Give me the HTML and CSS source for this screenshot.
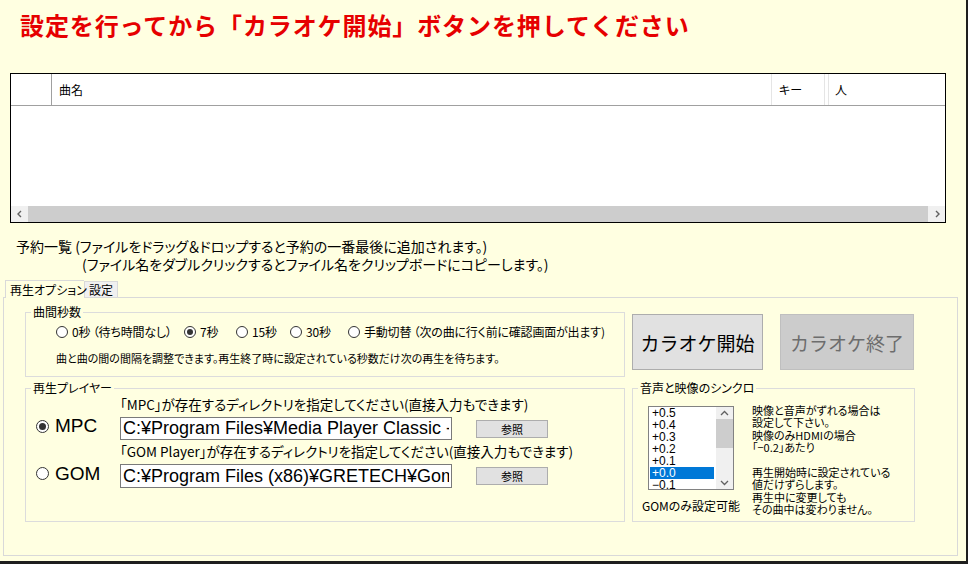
FILE: index.html
```html
<!DOCTYPE html>
<html lang="ja">
<head>
  <meta charset="utf-8">
  <link rel="stylesheet" href="styles.css">
</head>
<body>
<div class="window">
  <h1 class="title">設定を行ってから「カラオケ開始」ボタンを押してください</h1>

  <div class="grid">
    <div class="grid-head">
      <div class="col col-no"></div>
      <div class="col col-name">曲名</div>
      <div class="col col-key">キー</div>
      <div class="col col-person">人</div>
    </div>
    <div class="grid-body"></div>
    <div class="hscroll">
      <span class="hs-btn"><svg width="8" height="8" viewBox="0 0 8 8"><polyline points="5,1 2,4 5,7" fill="none" stroke="#606060" stroke-width="1.4"/></svg></span>
      <span class="hs-track"></span>
      <span class="hs-btn"><svg width="8" height="8" viewBox="0 0 8 8"><polyline points="3,1 6,4 3,7" fill="none" stroke="#606060" stroke-width="1.4"/></svg></span>
    </div>
  </div>

  <p class="note">予約一覧 (ファイルをドラッグ＆ドロップすると予約の一番最後に追加されます。)<br>
    <span class="note-indent">(ファイル名をダブルクリックするとファイル名をクリップボードにコピーします。)</span></p>

  <div class="tabs">
    <div class="tab tab-active">再生オプション</div>
    <div class="tab">設定</div>
  </div>

  <div class="panel">
    <fieldset class="group">
      <legend>曲間秒数</legend>
      <div class="interval-body">
        <div class="radio-row">
          <label class="radio r-0"><span class="dot"></span>0秒 （待ち時間なし）</label>
          <label class="radio r-7"><span class="dot checked"></span>7秒</label>
          <label class="radio r-15"><span class="dot"></span>15秒</label>
          <label class="radio r-30"><span class="dot"></span>30秒</label>
          <label class="radio"><span class="dot"></span>手動切替 （次の曲に行く前に確認画面が出ます)</label>
        </div>
        <p class="hint">曲と曲の間の間隔を調整できます。再生終了時に設定されている秒数だけ次の再生を待ちます。</p>
      </div>
    </fieldset>

    <div class="actions">
      <button class="big-btn">カラオケ開始</button>
      <button class="big-btn big-btn-off" disabled>カラオケ終了</button>
    </div>

    <fieldset class="group">
      <legend>再生プレイヤー</legend>
      <div class="player-grid">
        <div class="player-label">「MPC」が存在するディレクトリを指定してください(直接入力もできます)</div>
        <label class="player-radio"><span class="dot big checked"></span>MPC</label>
        <div class="path-row">
          <input class="path-input" type="text" value="C:¥Program Files¥Media Player Classic - Home Cinema">
          <button class="ref-btn">参照</button>
        </div>
        <div class="player-label label-2">「GOM Player」が存在するディレクトリを指定してください(直接入力もできます)</div>
        <label class="player-radio"><span class="dot big"></span>GOM</label>
        <div class="path-row">
          <input class="path-input path-2" type="text" value="C:¥Program Files (x86)¥GRETECH¥GomPlayer">
          <button class="ref-btn">参照</button>
        </div>
      </div>
    </fieldset>

    <fieldset class="group">
      <legend>音声と映像のシンクロ</legend>
      <div class="sync">
        <div class="sync-left">
          <div class="listbox">
            <ul class="list-items">
              <li>+0.5</li>
              <li>+0.4</li>
              <li>+0.3</li>
              <li>+0.2</li>
              <li>+0.1</li>
              <li class="selected">+0.0</li>
              <li>−0.1</li>
            </ul>
            <div class="vscroll">
              <svg width="17" height="12" viewBox="0 0 17 12"><polyline points="5,8 8.5,4.5 12,8" fill="none" stroke="#606060" stroke-width="1.3"/></svg>
              <span class="vs-thumb"></span>
              <span class="vs-space"></span>
              <svg width="17" height="12" viewBox="0 0 17 12"><polyline points="5,4 8.5,7.5 12,4" fill="none" stroke="#606060" stroke-width="1.3"/></svg>
            </div>
          </div>
          <div class="sync-caption">GOMのみ設定可能</div>
        </div>
        <div class="sync-text">
          <div>映像と音声がずれる場合は</div>
          <div>設定して下さい。</div>
          <div>映像のみHDMIの場合</div>
          <div>「−0.2」あたり</div>
          <div class="gap-line"></div>
          <div>再生開始時に設定されている</div>
          <div>値だけずらします。</div>
          <div>再生中に変更しても</div>
          <div>その曲中は変わりません。</div>
        </div>
      </div>
    </fieldset>
  </div>
</div>
</body>
</html>
```

FILE: styles.css
```css
body {
  margin: 0;
  background: #ffffe1;
  font-family: "Noto Sans CJK JP", sans-serif;
  font-feature-settings: "palt";
  color: #000;
}

.window {
  width: 968px;
  height: 564px;
  box-sizing: border-box;
  border-right: 2px solid #1e1e1e;
  border-bottom: 3px solid #1e1e1e;
  overflow: hidden;
}

.title {
  margin: 0;
  height: 73px;
  box-sizing: border-box;
  padding: 10px 0 0 20px;
  font-size: 24px;
  line-height: 30px;
  font-weight: 700;
  letter-spacing: 0.9px;
  font-feature-settings: normal;
  color: #e60000;
}

/* song list */
.grid {
  margin-left: 10px;
  width: 936px;
  height: 150px;
  box-sizing: border-box;
  border: 1px solid #000;
  background: #fff;
  display: flex;
  flex-direction: column;
}
.grid-head {
  display: flex;
  height: 31px;
  border-bottom: 1px solid #a0a0a0;
  font-size: 12px;
}
.col {
  display: flex;
  align-items: center;
  padding-left: 7px;
  box-sizing: border-box;
}
.col-no {
  width: 41px;
  border-right: 1px solid #a0a0a0;
}
.col-name {
  width: 720px;
  border-right: 1px solid #e5e5e5;
}
.col-key {
  width: 53px;
  border-right: 1px solid #e5e5e5;
  box-shadow: 3px 0 0 #fff, 4px 0 0 #e5e5e5;
}
.col-person {
  flex: 1;
  padding-left: 10px;
}
.grid-body {
  flex: 1;
}
.hscroll {
  display: flex;
  height: 16px;
  background: #f0f0f0;
}
.hs-btn {
  width: 17px;
  display: flex;
  align-items: center;
  justify-content: center;
}
.hs-track {
  flex: 1;
  background: #cdcdcd;
}

.note {
  margin: 14px 0 0 16px;
  font-size: 14px;
  line-height: 18px;
}
.note-indent {
  padding-left: 66px;
}

/* tabs */
.tabs {
  display: flex;
  align-items: flex-end;
  margin: 7px 0 0 5px;
  font-size: 12px;
  white-space: nowrap;
}
.tab {
  height: 15px;
  line-height: 15px;
  padding: 0 4px;
  border: 1px solid #d9d9d9;
  border-bottom: none;
  background: #f0f0f0;
}
.tab-active {
  position: relative;
  z-index: 1;
  height: 18px;
  line-height: 18px;
  width: 79px;
  box-sizing: border-box;
  padding: 0 0 0 4px;
  margin-bottom: -1px;
  background: #ffffe1;
  border-right: none;
}

.panel {
  margin-left: 3px;
  width: 955px;
  height: 259px;
  box-sizing: border-box;
  border: 1px solid #d9d9d9;
  padding: 7px 0 0 21px;
  display: grid;
  grid-template-columns: 600px 283px;
  grid-template-rows: 72px 141px;
  column-gap: 7px;
  row-gap: 4px;
  font-size: 12px;
}

.group {
  margin: 0;
  padding: 0;
  min-width: 0;
  border: 1px solid #dcdcdc;
}
.group legend {
  margin-left: 5px;
  padding: 0 2px;
  font-size: 12px;
  line-height: 14px;
}

/* interval */
.interval-body {
  padding: 6px 0 0 30px;
}
.radio-row {
  display: flex;
  line-height: 14px;
  letter-spacing: -0.2px;
}
.radio {
  display: flex;
  align-items: center;
  gap: 4px;
  white-space: nowrap;
}
.r-0 { width: 128px; }
.r-7 { width: 52px; }
.r-15 { width: 54px; }
.r-30 { width: 58px; }

.dot {
  width: 12px;
  height: 12px;
  box-sizing: border-box;
  border: 1px solid #333;
  border-radius: 50%;
  background: #fff;
  display: flex;
  align-items: center;
  justify-content: center;
  flex-shrink: 0;
}
.dot.checked::after {
  content: "";
  width: 6px;
  height: 6px;
  border-radius: 50%;
  background: #333;
}
.dot.big {
  width: 13px;
  height: 13px;
}
.dot.big.checked::after {
  width: 7px;
  height: 7px;
}

.hint {
  margin: 12px 0 0;
  font-size: 11px;
  line-height: 14px;
}

/* big buttons */
.actions {
  display: flex;
  gap: 17px;
  padding-top: 9px;
}
.big-btn {
  width: 131px;
  height: 56px;
  border: 1px solid #adadad;
  background: #e1e1e1;
  font-family: inherit;
  font-size: 19px;
  color: #000;
  padding: 0;
}
.big-btn-off {
  width: 134px;
  background: #cccccc;
  border-color: #bfbfbf;
  color: #6d6d6d;
}

/* player */
.player-grid {
  display: grid;
  grid-template-columns: 84px auto;
  padding: 1px 0 0 10px;
}
.player-label {
  grid-column: 2;
  font-size: 13.5px;
  line-height: 16px;
  white-space: nowrap;
}
.label-2 {
  margin-top: 3px;
}
.player-radio {
  display: flex;
  align-items: center;
  gap: 6px;
  font-family: "Liberation Sans", sans-serif;
  font-size: 19px;
}
.path-row {
  display: flex;
  align-items: center;
  gap: 24px;
  margin-top: 5px;
}
.path-input {
  width: 332px;
  height: 23px;
  box-sizing: border-box;
  border: 1px solid #7a7a7a;
  padding: 0 2px;
  font-family: "Liberation Sans", sans-serif;
  font-size: 18px;
  color: #000;
  background: #fff;
}
.path-2 {
  height: 24px;
}
.ref-btn {
  width: 72px;
  height: 18px;
  padding: 0;
  border: 1px solid #adadad;
  background: #e1e1e1;
  font-family: inherit;
  font-size: 11px;
  color: #000;
}

/* sync */
.sync {
  display: flex;
  padding: 11px 0 0 8px;
}
.sync-left {
  width: 100px;
  display: flex;
  flex-direction: column;
  align-items: center;
  gap: 9px;
}
.listbox {
  width: 86px;
  height: 84px;
  box-sizing: border-box;
  border: 1px solid #828282;
  background: #fff;
  display: flex;
}
.list-items {
  list-style: none;
  margin: 0;
  padding: 0 0 0 1px;
  width: 64px;
  font-family: "Liberation Sans Narrow", "Liberation Sans", sans-serif;
  font-size: 12px;
  line-height: 12px;
}
.list-items li {
  padding-left: 2px;
}
.list-items .selected {
  background: #0078d7;
  color: #fff;
}
.vscroll {
  margin-left: auto;
  width: 17px;
  display: flex;
  flex-direction: column;
  background: #f0f0f0;
}
.vs-thumb {
  height: 29px;
  background: #cdcdcd;
}
.vs-space {
  flex: 1;
}
.sync-caption {
  line-height: 14px;
}
.sync-text {
  margin: -2px 0 0 11px;
  font-size: 11px;
  line-height: 12.4px;
  white-space: nowrap;
}
.gap-line {
  height: 12.4px;
}
```
